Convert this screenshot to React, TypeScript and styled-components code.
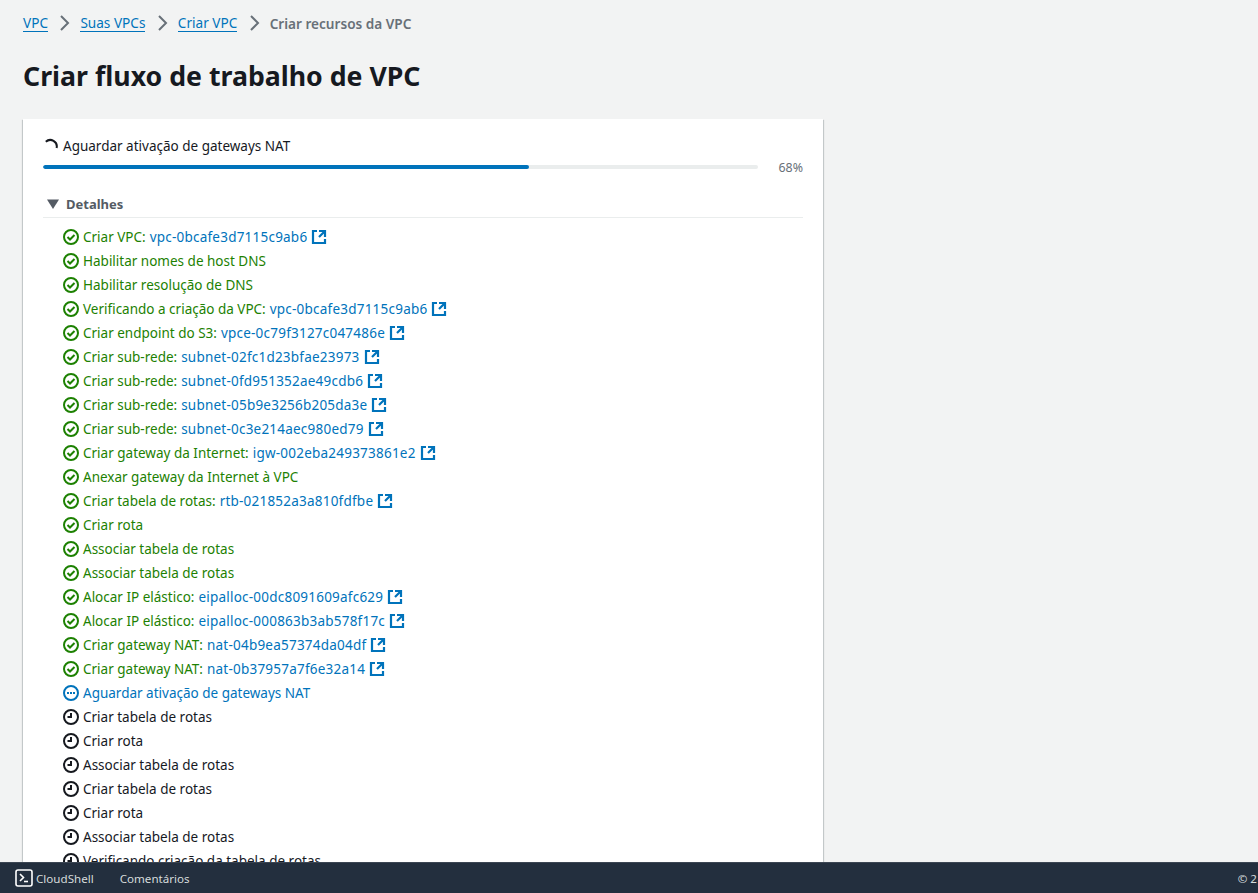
import React from 'react';
import styled, { createGlobalStyle } from 'styled-components';

const GlobalStyle = createGlobalStyle`
  html, body {
    margin: 0;
    padding: 0;
    height: 100%;
    overflow: hidden;
    background: #f2f3f3;
    font-family: "Noto Sans", "Open Sans", sans-serif;
  }
`;

const Page = styled.div`
  display: flex;
  flex-direction: column;
  height: 893px;
  overflow: hidden;
`;

const Main = styled.main`
  flex: 1;
  min-height: 0;
  overflow: hidden;
  padding: 0 23px;
`;

const Breadcrumbs = styled.nav`
  display: flex;
  align-items: center;
  height: 46px;
  font-size: 13.6px;
`;

const CrumbLink = styled.a`
  color: #0073bb;
  line-height: 16px;
  border-bottom: 1px solid #0073bb;
`;

const CrumbCurrent = styled.span`
  color: #687078;
  font-weight: 600;
`;

const CrumbChevron = styled.svg`
  width: 16px;
  height: 16px;
  margin: 0 8px 0 8.4px;
  fill: none;
  stroke: #687078;
  stroke-width: 2;
`;

const Title = styled.h1`
  margin: 11px 0 24px;
  font-size: 26.7px;
  line-height: 38px;
  font-weight: 700;
  color: #16191f;
`;

const Card = styled.section`
  width: 800px;
  box-sizing: border-box;
  padding: 17px 20px 0;
  background: #fff;
  box-shadow: 0 1px 1px 0 rgba(0, 28, 36, 0.3), 1px 1px 1px 0 rgba(0, 28, 36, 0.15),
    -1px 1px 1px 0 rgba(0, 28, 36, 0.15);
`;

const ProgressLabel = styled.div`
  display: flex;
  align-items: center;
  height: 20px;
  gap: 4px;
  font-size: 13.5px;
  color: #16191f;
`;

const Spinner = styled.svg`
  width: 16px;
  height: 16px;
  fill: none;
  stroke: #16191f;
  stroke-width: 2;
`;

const ProgressRow = styled.div`
  display: flex;
  align-items: center;
  height: 22px;
`;

const Track = styled.div`
  width: 715px;
  height: 4px;
  border-radius: 2px;
  background: #eaeded;
  overflow: hidden;
`;

const Fill = styled.div`
  height: 100%;
  background: #0073bb;
  border-radius: 2px;
`;

const Percent = styled.span`
  margin-left: auto;
  font-size: 12.4px;
  color: #687078;
`;

const DetailsHeader = styled.div`
  display: flex;
  align-items: center;
  gap: 7px;
  height: 27px;
  margin-top: 12px;
  padding-left: 4px;
  border-bottom: 1px solid #eaeded;
  font-size: 13px;
  font-weight: 700;
  color: #545b64;
`;

const Caret = styled.svg`
  width: 12px;
  height: 12px;
  fill: #545b64;
`;

const StepList = styled.ul`
  list-style: none;
  margin: 7px 0 0;
  padding: 0 0 0 20px;
`;

type Status = 'done' | 'active' | 'pending';

const statusColors: Record<Status, string> = {
  done: '#1d8102',
  active: '#0073bb',
  pending: '#16191f',
};

const Step = styled.li<{ $status: Status }>`
  display: flex;
  align-items: center;
  height: 24px;
  font-size: 13.5px;
  white-space: nowrap;
  color: ${({ $status }) => statusColors[$status]};
`;

const StatusIcon = styled.svg`
  flex: none;
  width: 16px;
  height: 16px;
  margin-right: 4px;
  fill: none;
  stroke: currentColor;
  stroke-width: 2;
`;

const ResourceLink = styled.a`
  margin-left: 4px;
  letter-spacing: 0.22px;
  color: #0073bb;
`;

const ExternalIcon = styled.svg`
  width: 16px;
  height: 16px;
  margin-left: 4px;
  fill: none;
  stroke: #0073bb;
  stroke-width: 2.2;
`;

const Footer = styled.footer`
  flex: none;
  display: flex;
  align-items: center;
  box-sizing: border-box;
  height: 31px;
  padding-left: 15px;
  background: #232f3e;
  border-top: 1px solid #3c4653;
  font-size: 11.6px;
  color: #d5dbdb;
  white-space: nowrap;
  overflow: hidden;
`;

const FooterIcon = styled.svg`
  width: 18px;
  height: 18px;
  margin-right: 3px;
  flex: none;
`;

const FooterItem = styled.span`
  margin-right: 26px;
`;

const Copyright = styled.span`
  flex: none;
  margin-left: auto;
  padding-right: 1px;
`;

type StepData = { status: Status; label: string; resource?: string };

const steps: StepData[] = [
  { status: 'done', label: 'Criar VPC:', resource: 'vpc-0bcafe3d7115c9ab6' },
  { status: 'done', label: 'Habilitar nomes de host DNS' },
  { status: 'done', label: 'Habilitar resolução de DNS' },
  { status: 'done', label: 'Verificando a criação da VPC:', resource: 'vpc-0bcafe3d7115c9ab6' },
  { status: 'done', label: 'Criar endpoint do S3:', resource: 'vpce-0c79f3127c047486e' },
  { status: 'done', label: 'Criar sub-rede:', resource: 'subnet-02fc1d23bfae23973' },
  { status: 'done', label: 'Criar sub-rede:', resource: 'subnet-0fd951352ae49cdb6' },
  { status: 'done', label: 'Criar sub-rede:', resource: 'subnet-05b9e3256b205da3e' },
  { status: 'done', label: 'Criar sub-rede:', resource: 'subnet-0c3e214aec980ed79' },
  { status: 'done', label: 'Criar gateway da Internet:', resource: 'igw-002eba249373861e2' },
  { status: 'done', label: 'Anexar gateway da Internet à VPC' },
  { status: 'done', label: 'Criar tabela de rotas:', resource: 'rtb-021852a3a810fdfbe' },
  { status: 'done', label: 'Criar rota' },
  { status: 'done', label: 'Associar tabela de rotas' },
  { status: 'done', label: 'Associar tabela de rotas' },
  { status: 'done', label: 'Alocar IP elástico:', resource: 'eipalloc-00dc8091609afc629' },
  { status: 'done', label: 'Alocar IP elástico:', resource: 'eipalloc-000863b3ab578f17c' },
  { status: 'done', label: 'Criar gateway NAT:', resource: 'nat-04b9ea57374da04df' },
  { status: 'done', label: 'Criar gateway NAT:', resource: 'nat-0b37957a7f6e32a14' },
  { status: 'active', label: 'Aguardar ativação de gateways NAT' },
  { status: 'pending', label: 'Criar tabela de rotas' },
  { status: 'pending', label: 'Criar rota' },
  { status: 'pending', label: 'Associar tabela de rotas' },
  { status: 'pending', label: 'Criar tabela de rotas' },
  { status: 'pending', label: 'Criar rota' },
  { status: 'pending', label: 'Associar tabela de rotas' },
  { status: 'pending', label: 'Verificando criação da tabela de rotas' },
];

const Chevron = () => (
  <CrumbChevron viewBox="0 0 16 16">
    <path d="M5 1l7 7-7 7" />
  </CrumbChevron>
);

const StepIcon = ({ status }: { status: Status }) => (
  <StatusIcon viewBox="0 0 16 16">
    <circle cx="8" cy="8" r="7" />
    {status === 'done' && <path d="M4.5 8l2.5 2.5 4.5-4.5" />}
    {status === 'active' && <path d="M4 8h2M7 8h2M10 8h2" strokeWidth="1.8" />}
    {status === 'pending' && <path d="M8 4v4H4.5" />}
  </StatusIcon>
);

export default function App() {
  return (
    <Page>
      <GlobalStyle />
      <Main>
        <Breadcrumbs>
          <CrumbLink>VPC</CrumbLink>
          <Chevron />
          <CrumbLink>Suas VPCs</CrumbLink>
          <Chevron />
          <CrumbLink>Criar VPC</CrumbLink>
          <Chevron />
          <CrumbCurrent>Criar recursos da VPC</CrumbCurrent>
        </Breadcrumbs>
        <Title>Criar fluxo de trabalho de VPC</Title>
        <Card>
          <ProgressLabel>
            <Spinner viewBox="0 0 16 16">
              <path d="M2.8 3.8A6.5 6.5 0 0 1 13.6 10" />
            </Spinner>
            Aguardar ativação de gateways NAT
          </ProgressLabel>
          <ProgressRow>
            <Track>
              <Fill style={{ width: '68%' }} />
            </Track>
            <Percent>68%</Percent>
          </ProgressRow>
          <DetailsHeader>
            <Caret viewBox="0 0 12 12">
              <path d="M0 1.5h12L6 11z" />
            </Caret>
            Detalhes
          </DetailsHeader>
          <StepList>
            {steps.map((step, i) => (
              <Step key={i} $status={step.status}>
                <StepIcon status={step.status} />
                {step.label}
                {step.resource && (
                  <>
                    <ResourceLink>{step.resource}</ResourceLink>
                    <ExternalIcon viewBox="0 0 16 16">
                      <path d="M14 8.01v-6H8M14.02 2 8 8.01M6 2.01H2v12h12v-3.99" />
                    </ExternalIcon>
                  </>
                )}
              </Step>
            ))}
          </StepList>
        </Card>
      </Main>
      <Footer>
        <FooterIcon viewBox="0 0 18 18">
          <rect x="1" y="1" width="16" height="16" rx="2" fill="none" stroke="#fff" strokeWidth="1.6" />
          <path d="M5 5l3.5 3.5L5 12" fill="none" stroke="#fff" strokeWidth="1.6" />
          <path d="M9 12.5h4" fill="none" stroke="#fff" strokeWidth="1.6" />
        </FooterIcon>
        <FooterItem>CloudShell</FooterItem>
        <FooterItem>Comentários</FooterItem>
        <Copyright>© 2</Copyright>
      </Footer>
    </Page>
  );
}
